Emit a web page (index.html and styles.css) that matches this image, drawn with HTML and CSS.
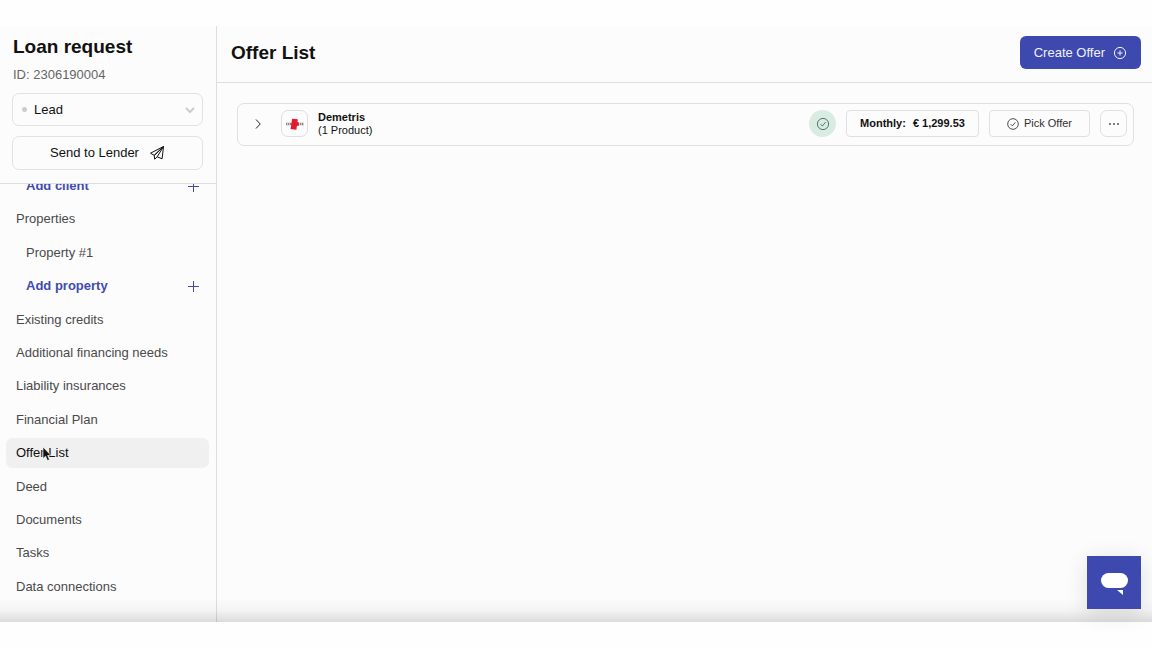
FILE: index.html
```html
<!DOCTYPE html>
<html lang="en">
<head>
<meta charset="utf-8">
<meta name="viewport" content="width=device-width, initial-scale=1">
<title>Loan request - Offer List</title>
<link rel="stylesheet" href="styles.css">
</head>
<body>
<div class="app">
  <aside class="sidebar">
    <header class="request">
      <h1 class="request-title">Loan request</h1>
      <p class="request-id">ID: 2306190004</p>
      <div class="status">
        <span class="status-dot"></span>
        <select class="status-select" aria-label="Status"><option>Lead</option></select>
        <svg class="status-arrow" width="10" height="8" viewBox="0 0 10 8" aria-hidden="true"><path d="M1 2l4 4 4-4"/></svg>
      </div>
      <button class="send" type="button">Send to Lender
        <svg width="16" height="16" viewBox="0 0 16 16" aria-hidden="true"><path d="M14.500 1.500L1.500 8.200l3.700 2.200zM14.500 1.500L5.200 10.400l.5 3.800 2.500-2.400M14.500 1.500L8.200 11.800l4.900 2z"/></svg>
      </button>
    </header>
    <nav class="nav" aria-label="Request sections">
      <ul class="nav-list">
        <li><button class="nav-item nav-add" type="button">Add client <svg width="12" height="12" viewBox="0 0 12 12" aria-hidden="true"><path d="M6.500 1v11M1 6.500h11"/></svg></button></li>
        <li><a class="nav-item" href="#properties">Properties</a></li>
        <li><a class="nav-item nav-sub" href="#property-1">Property #1</a></li>
        <li><button class="nav-item nav-add" type="button">Add property <svg width="12" height="12" viewBox="0 0 12 12" aria-hidden="true"><path d="M6.500 1v11M1 6.500h11"/></svg></button></li>
        <li><a class="nav-item" href="#credits">Existing credits</a></li>
        <li><a class="nav-item" href="#financing">Additional financing needs</a></li>
        <li><a class="nav-item" href="#insurances">Liability insurances</a></li>
        <li><a class="nav-item" href="#plan">Financial Plan</a></li>
        <li><a class="nav-item nav-current" href="#offers" aria-current="page">Offer List
          <svg class="cursor" width="10" height="16" viewBox="0 0 10 16" aria-hidden="true"><path d="M1 1v11.500l2.600-2.300 1.900 4.300 2-.9-1.900-4.100h3.400z"/></svg></a></li>
        <li><a class="nav-item" href="#deed">Deed</a></li>
        <li><a class="nav-item" href="#documents">Documents</a></li>
        <li><a class="nav-item" href="#tasks">Tasks</a></li>
        <li><a class="nav-item" href="#connections">Data connections</a></li>
      </ul>
    </nav>
  </aside>
  <main class="main">
    <header class="topbar">
      <h2 class="topbar-title">Offer List</h2>
      <button class="create" type="button">Create Offer
        <svg width="14" height="14" viewBox="0 0 14 14" aria-hidden="true"><circle cx="7" cy="7" r="5.600"/><path d="M7 4.400v5.200M4.400 7h5.200"/></svg>
      </button>
    </header>
    <article class="offer">
      <button class="expand" type="button" aria-label="Expand offer"><svg width="8" height="12" viewBox="0 0 8 12" aria-hidden="true"><path d="M2 1.500L6.200 6 2 10.500"/></svg></button>
      <span class="bank">
        <svg width="18" height="12" viewBox="0 0 18 12" aria-hidden="true"><path class="bank-line" d="M0 6h18"/><path class="bank-dash" d="M0 6h18"/><path class="bank-red" d="M6 .8l5.800.5-.3 3 1.500.2-.5 3.400-1.600-.1-.5 3.900-5.900-.6.7-4 .5-3z"/><path class="bank-mark" d="M5 6h7"/></svg>
      </span>
      <div class="offer-name"><strong>Demetris</strong><span>(1 Product)</span></div>
      <span class="approved" role="img" aria-label="Approved"><svg width="14" height="14" viewBox="0 0 14 14" aria-hidden="true"><circle cx="7" cy="7" r="5.600"/><path d="M4.400 7.200l1.900 1.800 3.400-3.900"/></svg></span>
      <div class="monthly"><span>Monthly:</span><span>€ 1,299.53</span></div>
      <button class="pick" type="button"><svg width="12" height="12" viewBox="0 0 14 14" aria-hidden="true"><circle cx="7" cy="7" r="6.200"/><path d="M4.200 7.200l2 2 3.600-4.200"/></svg>Pick Offer</button>
      <button class="more" type="button" aria-label="More actions"><svg width="12" height="4" viewBox="0 0 12 4" aria-hidden="true"><circle cx="2" cy="2" r=".9"/><circle cx="6" cy="2" r=".9"/><circle cx="10" cy="2" r=".9"/></svg></button>
    </article>
  </main>
  <button class="chat" type="button" aria-label="Open chat"><svg width="28" height="24" viewBox="0 0 28 24" aria-hidden="true"><rect x="1" y="2" width="27" height="15" rx="7.500"/><path d="M17 19h6v5z"/></svg></button>
</div>
</body>
</html>
```

FILE: styles.css
```css
* {
  box-sizing: border-box;
}

body {
  margin: 0;
  min-height: 100vh;
  padding: 26px 0;
  display: flex;
  background: #fefefe;
  color: #111;
  font: 13px/16px "Liberation Sans", Arial, sans-serif;
}

h1, h2, p, ul {
  margin: 0;
  padding: 0;
}

button, select {
  font: inherit;
  color: inherit;
  cursor: pointer;
}

svg {
  flex: none;
  fill: none;
  stroke: currentColor;
}

.app {
  position: relative;
  flex: 1;
  display: flex;
  background: #fcfcfc;
}

/* soft shade along the lower edge of the window */
.app::after {
  content: "";
  position: absolute;
  inset: auto 0 0;
  height: 24px;
  background: linear-gradient(rgba(0, 0, 0, 0), rgba(0, 0, 0, .03) 50%, rgba(0, 0, 0, .13));
  pointer-events: none;
}

.sidebar {
  flex: none;
  width: 217px;
  display: flex;
  flex-direction: column;
  border-right: 1px solid #dedede;
}

.request {
  display: flex;
  flex-direction: column;
  padding: 9px 13px 13px 12px;
  border-bottom: 1px solid #dedede;
}

.request-title {
  padding-left: 1px;
  font-size: 19px;
  line-height: 24px;
}

.request-id {
  margin: 8px 0 10px;
  padding-left: 1px;
  color: #666;
}

.status {
  position: relative;
  display: flex;
  align-items: center;
}

.status-select {
  flex: 1;
  height: 33px;
  padding: 0 24px 0 21px;
  appearance: none;
  border: 1px solid #e2e2e2;
  border-radius: 7px;
  background: none;
}

.status-dot {
  position: absolute;
  left: 10px;
  width: 5px;
  height: 5px;
  border-radius: 50%;
  background: #ccc;
}

.status-arrow {
  position: absolute;
  right: 8px;
  color: #ccc;
  stroke-width: 2;
  pointer-events: none;
}

.send {
  display: flex;
  align-items: center;
  justify-content: center;
  gap: 10px;
  height: 34px;
  margin-top: 10px;
  border: 1px solid #e2e2e2;
  border-radius: 7px;
  background: none;
  stroke-linejoin: round;
}

.nav {
  flex: 1;
  display: flex;
  overflow: hidden;
}

.nav-list {
  flex: 1;
  display: flex;
  flex-direction: column;
  justify-content: space-between;
  margin-top: -13px;
  padding: 0 7px 20px 6px;
  list-style: none;
}

.nav-item {
  position: relative;
  display: flex;
  align-items: center;
  width: 100%;
  height: 30px;
  padding: 0 10px;
  border: 0;
  border-radius: 7px;
  background: none;
  color: #4a4a4a;
  text-decoration: none;
}

.nav-sub {
  padding-left: 20px;
}

.nav-add {
  justify-content: space-between;
  padding-left: 20px;
  color: #3f4bb0;
  font-weight: bold;
}

.nav-current {
  background: #f0f0f0;
  color: #111;
}

.cursor {
  position: absolute;
  left: 36px;
  top: 8px;
  fill: #111;
  stroke: #fff;
  stroke-width: .6;
}

.main {
  flex: 1;
  min-width: 0;
}

.topbar {
  display: flex;
  align-items: center;
  justify-content: space-between;
  padding: 10px 11px 13px 14px;
  border-bottom: 1px solid #dedede;
}

.topbar-title {
  font-size: 19px;
  line-height: 24px;
}

.create {
  display: flex;
  align-items: center;
  gap: 8px;
  height: 33px;
  padding: 0 14px;
  border: 0;
  border-radius: 6px;
  background: #3e49b0;
  color: #f0f1fb;
}

.offer {
  display: flex;
  align-items: center;
  gap: 10px;
  margin: 20px 18px 0 20px;
  padding: 6px 6px 8px;
  border: 1px solid #e0e0e0;
  border-radius: 7px;
  font-size: 11px;
  line-height: 13px;
}

.expand {
  display: grid;
  place-items: center;
  width: 27px;
  height: 27px;
  padding: 0;
  border: 0;
  background: none;
  color: #222;
}

.bank {
  display: grid;
  place-items: center;
  width: 27px;
  height: 27px;
  border: 1px solid #dedede;
  border-radius: 7px;
}

.bank-line {
  stroke: #ccc;
  stroke-width: 3;
}

.bank-dash {
  stroke: #888;
  stroke-width: 2;
  stroke-dasharray: 1 1;
}

.bank-red {
  fill: #e9182c;
  stroke: none;
}

.bank-mark {
  stroke: #a72c3b;
  stroke-dasharray: 2 1;
}

.offer-name {
  flex: 1;
  display: flex;
  flex-direction: column;
}

.approved {
  display: grid;
  place-items: center;
  width: 27px;
  height: 27px;
  border-radius: 50%;
  background: #d9ece2;
  color: #55766a;
}

.monthly,
.pick,
.more {
  display: flex;
  align-items: center;
  justify-content: center;
  height: 27px;
  border: 1px solid #e0e0e0;
  border-radius: 4px;
  background: none;
}

.monthly {
  gap: 7px;
  padding: 0 13px;
  font-weight: bold;
}

.pick {
  gap: 5px;
  padding: 0 17px;
  color: #333;
}

.more {
  width: 27px;
  padding: 0;
  border-radius: 7px;
  color: #444;
}

.more svg {
  fill: currentColor;
  stroke: none;
}

.chat {
  position: absolute;
  right: 11px;
  bottom: 13px;
  z-index: 1;
  display: grid;
  place-items: center;
  width: 54px;
  height: 53px;
  padding: 0;
  border: 0;
  background: #3e49b0;
  box-shadow: 0 4px 22px rgba(0, 0, 0, .12);
}

.chat svg {
  fill: #fff;
  stroke: none;
}
```
